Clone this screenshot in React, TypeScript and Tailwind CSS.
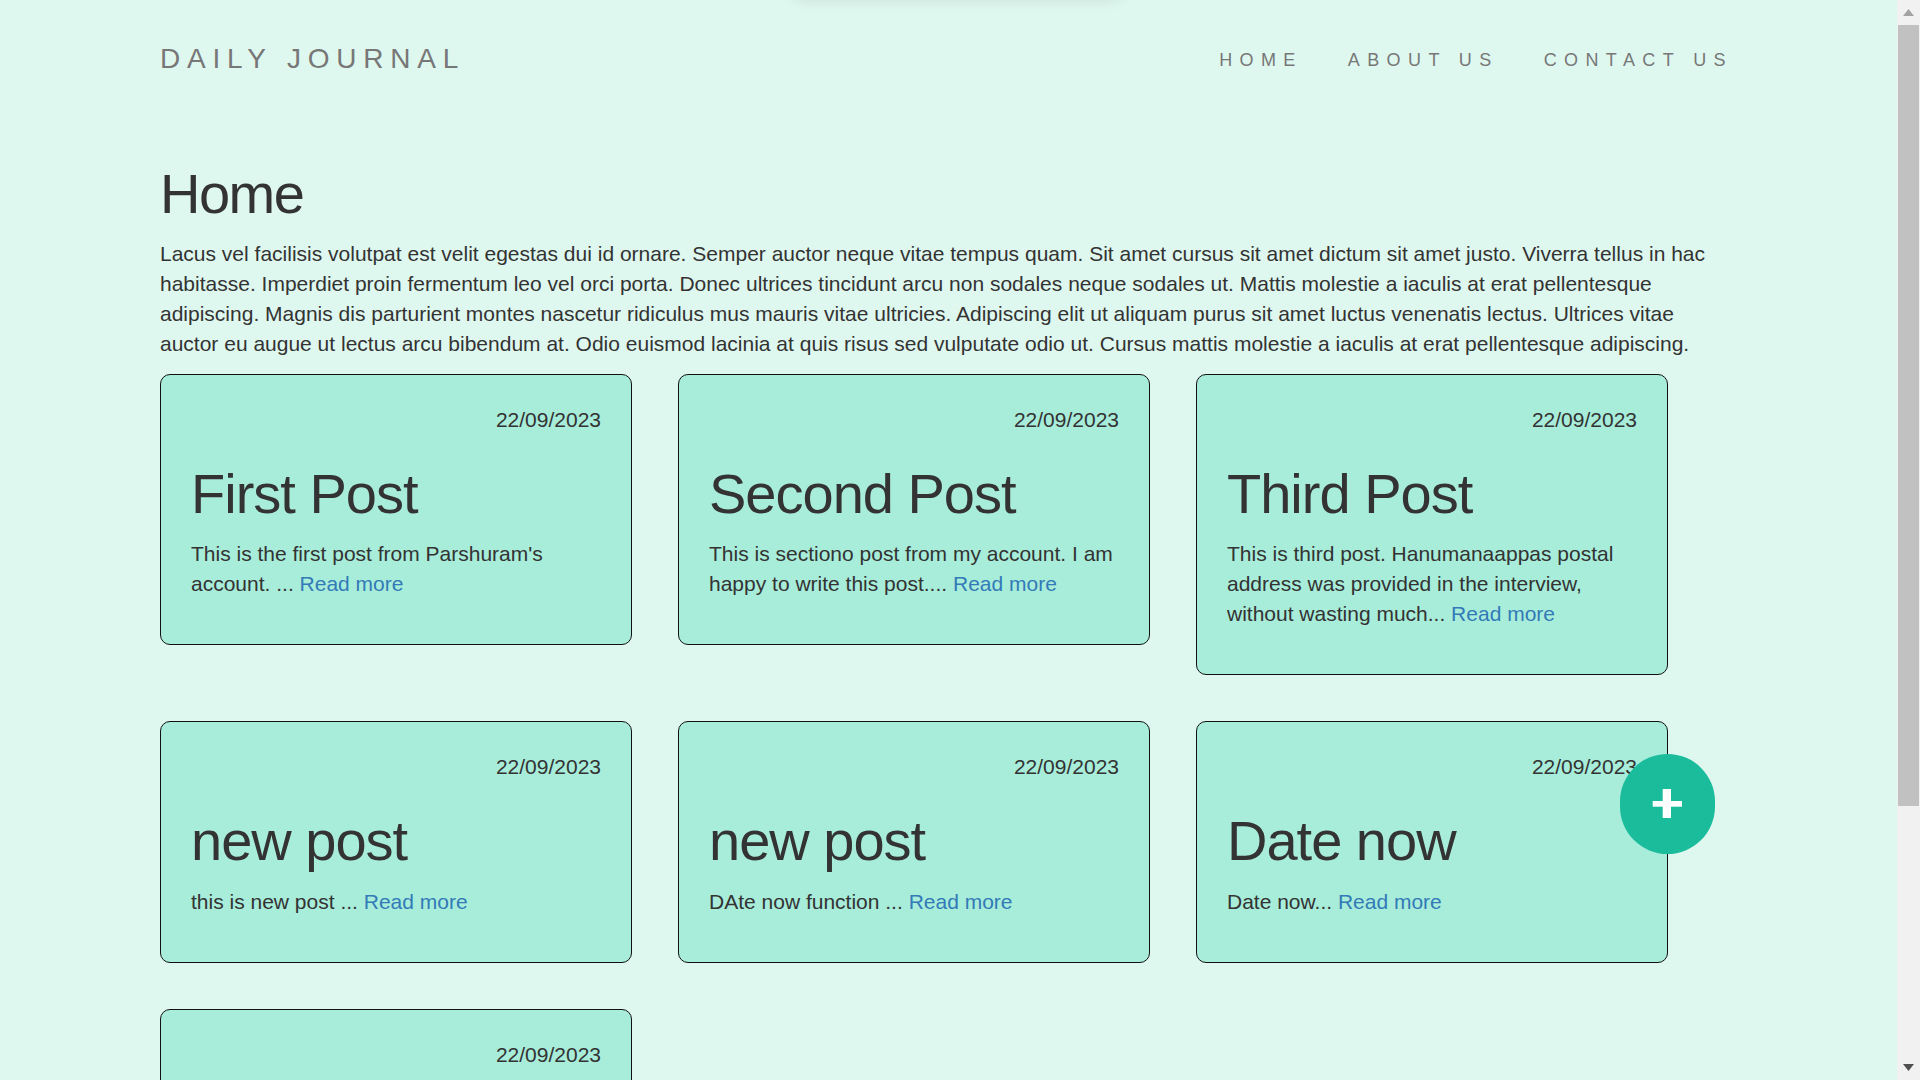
const posts = [
  {
    title: "First Post",
    body: "This is the first post from Parshuram's account. ...",
  },
  {
    title: "Second Post",
    body: "This is sectiono post from my account. I am happy to write this post....",
  },
  {
    title: "Third Post",
    body: "This is third post. Hanumanaappas postal address was provided in the interview, without wasting much...",
  },
  { title: "new post", body: "this is new post ..." },
  { title: "new post", body: "DAte now function ..." },
  { title: "Date now", body: "Date now..." },
  { title: "Last post", body: "Last post of the day..." },
]

const navItems = ["HOME", "ABOUT US", "CONTACT US"]

function PostCard({ title, body }: { title: string; body: string }) {
  return (
    <div className="rounded-[10px] border border-[#111] bg-[#a8edda] px-[30px] pt-[30px] pb-[45px]">
      <p className="text-right text-[21px] leading-[30px]">22/09/2023</p>
      <h2 className="mt-[28px] text-[56px] leading-[1.1] tracking-[-1px]">{title}</h2>
      <p className="mt-[15px] text-[21px] leading-[30px]">
        {body} <a href="#" className="text-[#337ab7]">Read more</a>
      </p>
    </div>
  )
}

// the page's scrollbar, as the browser drew it in the screenshot
function Scrollbar() {
  return (
    <div className="fixed right-0 top-0 flex h-[1080px] w-[23px] flex-col bg-[#f1f1f1]">
      <div className="flex h-[25px] items-center justify-center">
        <svg width="11" height="7" viewBox="0 0 11 7">
          <path d="M5.5 0 L11 7 L0 7 Z" fill="#a3a3a3" />
        </svg>
      </div>
      <div className="mx-[1px] h-[781px] bg-[#c1c1c1]" />
      <div className="flex-1" />
      <div className="flex h-[25px] items-center justify-center">
        <svg width="11" height="7" viewBox="0 0 11 7">
          <path d="M0 0 L11 0 L5.5 7 Z" fill="#505050" />
        </svg>
      </div>
    </div>
  )
}

export default function App() {
  return (
    <div className="min-h-screen bg-[#dff8ef] font-['Liberation_Sans',Arial,sans-serif] text-[#333]">
      {/* faint shadow peeking in from above */}
      <div className="pointer-events-none fixed left-[790px] top-[-30px] h-[30px] w-[335px] rounded-full shadow-[0_0_14px_rgba(0,0,0,0.10)]" />

      <div className="ml-[160px] w-[1573px] pb-[200px]">
        <header className="flex items-start justify-between pt-[43px]">
          <span className="text-[28px] leading-[32px] tracking-[6.8px] text-[#777]">DAILY JOURNAL</span>
          <nav className="mt-[5px] flex gap-[45px]">
            {navItems.map((item) => (
              <a key={item} href="#" className="text-[18px] leading-[24px] tracking-[7.4px] text-[#777]">
                {item}
              </a>
            ))}
          </nav>
        </header>

        <h1 className="mt-[88px] text-[56px] leading-[1.1] tracking-[-1.5px]">Home</h1>
        <p className="mt-[14px] text-[21px] leading-[30px]">
          Lacus vel facilisis volutpat est velit egestas dui id ornare. Semper auctor neque vitae tempus quam. Sit amet
          cursus sit amet dictum sit amet justo. Viverra tellus in hac habitasse. Imperdiet proin fermentum leo vel orci
          porta. Donec ultrices tincidunt arcu non sodales neque sodales ut. Mattis molestie a iaculis at erat
          pellentesque adipiscing. Magnis dis parturient montes nascetur ridiculus mus mauris vitae ultricies. Adipiscing
          elit ut aliquam purus sit amet luctus venenatis lectus. Ultrices vitae auctor eu augue ut lectus arcu bibendum
          at. Odio euismod lacinia at quis risus sed vulputate odio ut. Cursus mattis molestie a iaculis at erat
          pellentesque adipiscing.
        </p>

        <div className="mt-[15px] grid grid-cols-[472px_472px_472px] items-start gap-[46px]">
          {posts.map((post, i) => (
            <PostCard key={i} title={post.title} body={post.body} />
          ))}
        </div>
      </div>

      <button className="fixed left-[1620px] top-[754px] h-[100px] w-[95px] rounded-full bg-[#1abc9c]">
        <svg viewBox="0 0 95 100" className="h-full w-full">
          <rect x="32.7" y="47" width="29.3" height="5.7" fill="#fff" />
          <rect x="42.7" y="35" width="8.3" height="29" fill="#fff" />
        </svg>
      </button>

      <Scrollbar />
    </div>
  )
}
